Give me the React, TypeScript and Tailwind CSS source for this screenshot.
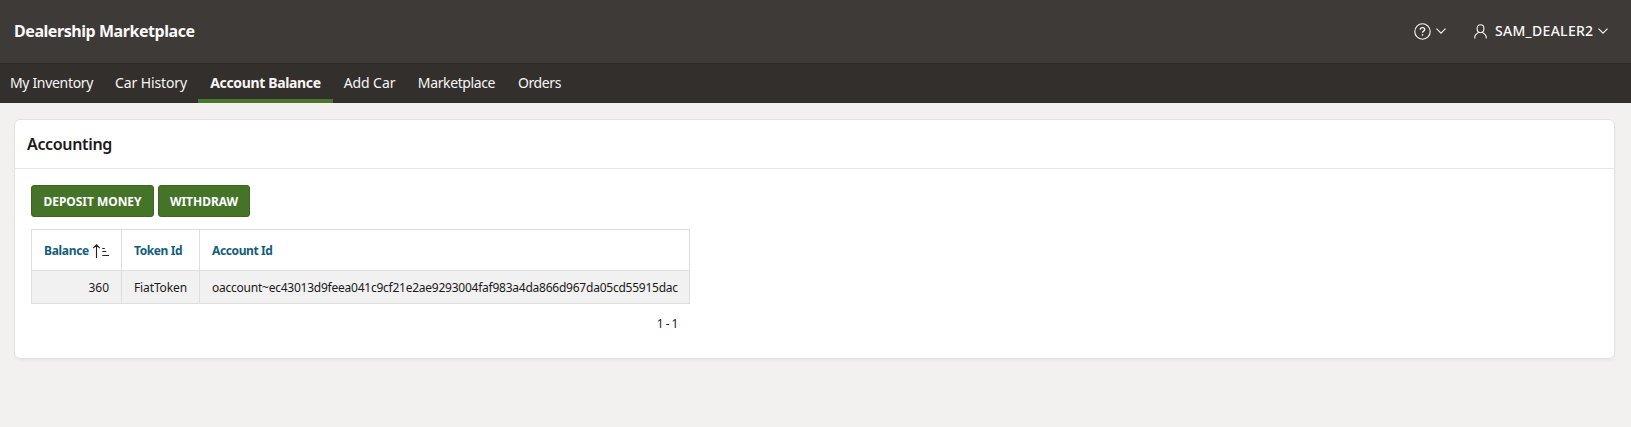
const tabs = [
  { label: "My Inventory", style: "w-[103px] tracking-[-0.32px] border-b-transparent" },
  { label: "Car History", style: "w-[95px] pl-px tracking-[-0.13px] border-b-transparent" },
  { label: "Account Balance", style: "w-[135px] tracking-[-0.35px] font-bold border-b-[#4b752d]" },
  { label: "Add Car", style: "w-[73px] tracking-[-0.08px] border-b-transparent" },
  { label: "Marketplace", style: "w-[101px] tracking-[-0.38px] border-b-transparent" },
  { label: "Orders", style: "w-[65px] tracking-[-0.4px] border-b-transparent" },
];

function Chevron() {
  return (
    <svg className="h-[6px] w-[10px]" viewBox="0 0 10 6" fill="none" stroke="currentColor" strokeWidth="1.1">
      <path d="M0.5 0.6 5 5.1 9.5 0.6" />
    </svg>
  );
}

function HelpIcon() {
  return (
    <svg className="size-[17px]" viewBox="0 0 17 17" fill="none" stroke="currentColor">
      <circle cx="8.5" cy="8.5" r="7.7" strokeWidth="1.1" />
      <path d="M6.3 6.7c0-1.3 1-2 2.2-2s2.2.8 2.2 1.9c0 1.6-2.2 1.5-2.2 3.2" strokeWidth="1.3" />
      <circle cx="8.5" cy="11.9" r="0.8" fill="currentColor" stroke="none" />
    </svg>
  );
}

function UserIcon() {
  return (
    <svg className="h-[15px] w-[13px]" viewBox="0 0 13 15" fill="none" stroke="currentColor" strokeWidth="1.1">
      <path d="M6.5.8C4.5.8 3.1 2.3 3.1 4.6S4.5 8.7 6.5 8.7 9.9 6.9 9.9 4.6 8.5.8 6.5.8Z" />
      <path d="M.8 14.5V12.8C.8 10.7 2.6 10.2 4.7 8.1M12.2 14.5V12.8C12.2 10.7 10.4 10.2 8.3 8.1" />
    </svg>
  );
}

function SortIcon() {
  return (
    <svg className="h-[15px] w-[16px] shrink-0" viewBox="0 0 16 15" fill="none" stroke="#222" strokeWidth="1.1">
      <path d="M3.5 14V.9M.3 4.1 3.5.8 6.7 4.1M9.3 4.5H11.8M9.3 7.5H13.3M9.3 11.5H16" />
    </svg>
  );
}

export default function App() {
  return (
    <div className="flex h-[427px] flex-col bg-[#f2f1f0] font-['Noto_Sans',sans-serif] text-[#1b1a19]">
      <header className="flex h-[63px] shrink-0 items-center justify-between bg-[#3e3a37] pr-[23px] pb-px pl-3.5 text-[#fbf9f8]">
        <h1 className="text-base font-bold tracking-[-0.44px]">Dealership Marketplace</h1>
        <div className="flex items-center">
          <button aria-label="Help" className="flex items-center gap-[5px]">
            <HelpIcon />
            <Chevron />
          </button>
          <button className="ml-[28px] flex items-center">
            <UserIcon />
            <span className="mr-[4px] ml-[8px] w-[99px] text-left text-sm leading-4 font-medium tracking-[0.3px]">
              SAM_DEALER2
            </span>
            <Chevron />
          </button>
        </div>
      </header>
      <nav className="flex h-10 shrink-0 border-t border-[#2b2825] bg-[#332f2c] text-sm text-[#f8f6f5]">
        {tabs.map((tab) => (
          <a
            key={tab.label}
            className={`flex items-center justify-center border-b-4 pt-0.5 whitespace-nowrap ${tab.style}`}
          >
            {tab.label}
          </a>
        ))}
      </nav>
      <main className="pt-4 pr-4 pl-3.5">
        <section className="h-[240px] rounded-md border border-[#e2e2e2] bg-white shadow-[0_2px_4px_-2px_rgba(0,0,0,0.1)]">
          <h2 className="flex h-[49px] items-center border-b border-[#e6e6e6] pl-3 text-base font-semibold tracking-[-0.33px]">
            Accounting
          </h2>
          <div className="px-4 pt-4">
            <div className="flex gap-1 text-xs font-bold tracking-[-0.04px] text-white">
              <button className="h-8 w-[123px] rounded-[3px] border border-[#3c6422] bg-[#457428] pt-0.5">DEPOSIT MONEY</button>
              <button className="h-8 w-[92px] rounded-[3px] border border-[#3c6422] bg-[#457428] pt-0.5">WITHDRAW</button>
            </div>
            <table className="mt-3 w-[659px] table-fixed border-collapse text-left text-xs">
              <colgroup>
                <col className="w-[90px]" />
                <col className="w-[78px]" />
                <col />
              </colgroup>
              <thead>
                <tr className="h-[41px] text-[#145c7c]">
                  <th className="border border-[#dedede] pt-0.5 pl-3 tracking-[-0.3px]">
                    <span className="flex items-center gap-[4px]">
                      <span className="w-[45px]">Balance</span>
                      <SortIcon />
                    </span>
                  </th>
                  <th className="border border-[#dedede] pt-0.5 pl-3 tracking-[-0.4px]">Token Id</th>
                  <th className="border border-[#dedede] pt-0.5 pl-3 tracking-[-0.38px]">Account Id</th>
                </tr>
              </thead>
              <tbody>
                <tr className="h-[33px] bg-[#f1f1f1]">
                  <td className="border border-[#dedede] pt-0.5 pr-3 text-right">360</td>
                  <td className="border border-[#dedede] pt-0.5 pl-3 tracking-[-0.12px]">FiatToken</td>
                  <td className="border border-[#dedede] pt-0.5 pl-3 tracking-[-0.24px] whitespace-nowrap">
                    oaccount~ec43013d9feea041c9cf21e2ae9293004faf983a4da866d967da05cd55915dac
                  </td>
                </tr>
              </tbody>
            </table>
            <p className="mt-3 w-[647px] text-right text-xs leading-4 tracking-[-0.5px]">1 - 1</p>
          </div>
        </section>
      </main>
    </div>
  );
}
